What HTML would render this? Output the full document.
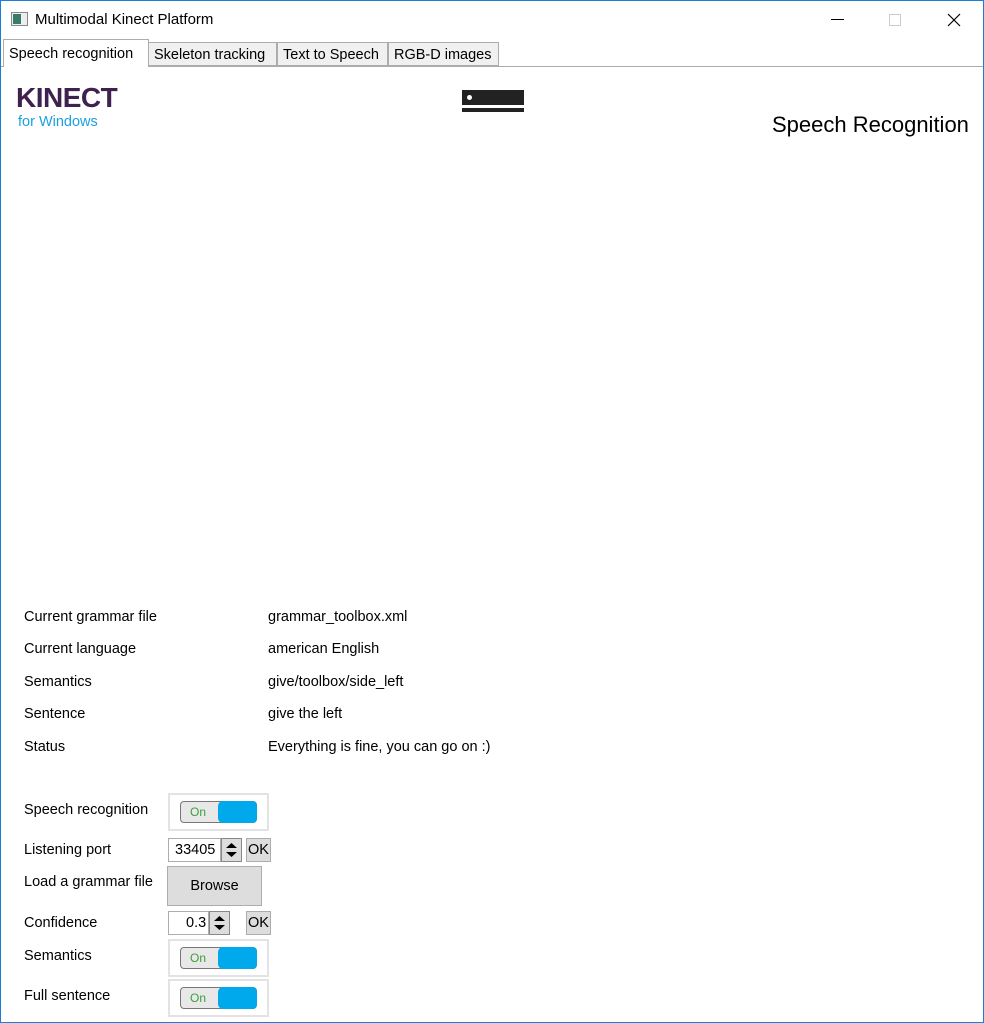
<!DOCTYPE html>
<html><head><style>
body{margin:0;width:984px;height:1023px;overflow:hidden;background:#fff;font-family:"Liberation Sans",sans-serif;}
.win{position:absolute;left:0;top:0;width:982px;height:1021px;border:1px solid #1a7fd4;background:#fff}
.a{position:absolute;white-space:nowrap}
.tab{position:absolute;top:41px;height:24px;background:#f0f0f0;border:1px solid #acacac;font-size:14.5px;line-height:24px;padding:0 5px;box-sizing:border-box;color:#000}
.lbl{position:absolute;left:23px;font-size:14.5px;color:#000}
.val{position:absolute;left:267px;font-size:14.5px;color:#000}
.tg{position:absolute;left:167px;width:101px;height:38px;border:2px solid #e3e3e3;box-sizing:border-box}
.sw{position:absolute;left:10px;top:6px;width:77px;height:22px;border:1px solid #777;border-radius:4px;background:#e8e8e8;box-sizing:border-box}
.sw b{position:absolute;right:-1px;top:-1px;width:39px;height:22px;background:#00a8ec;border-radius:5px}
.sw i{position:absolute;left:9px;top:3px;font-style:normal;font-size:12px;color:#3aa03a}
.btn{position:absolute;background:#ddd;border:1px solid #adadad;box-sizing:border-box;font-size:14.5px;text-align:center}
.num{position:absolute;border:1px solid #abadb3;box-sizing:border-box;font-size:14.5px;background:#fff}
.sp{position:absolute;width:21px;border:1px solid #888;background:#ddd;box-sizing:border-box}
</style></head><body><div class="win">
<svg class="a" style="left:10px;top:11px" width="18" height="15"><rect x="0.5" y="0.5" width="16" height="13" fill="#eee" stroke="#888"/><rect x="2" y="2" width="8" height="10" fill="#3a7a6a"/></svg>
<div class="a" style="left:34px;top:10px;font-size:15px">Multimodal Kinect Platform</div>
<div class="a" style="left:830px;top:18px;width:13px;height:1px;background:#000"></div>
<div class="a" style="left:888px;top:13px;width:10px;height:10px;border:1px solid #ccc"></div>
<svg class="a" style="left:946px;top:12px" width="14" height="14"><path d="M1 1L13 13M13 1L1 13" stroke="#000" stroke-width="1.2"/></svg>
<div class="a" style="left:0;top:65px;width:982px;height:1px;background:#acacac"></div>
<div class="tab" style="left:2px;top:38px;height:28px;width:146px;background:#fff;border-bottom:none;line-height:28px">Speech recognition</div>
<div class="tab" style="left:147px;width:129px">Skeleton tracking</div>
<div class="tab" style="left:276px;width:111px">Text to Speech</div>
<div class="tab" style="left:387px;width:111px">RGB-D images</div>
<div class="a" style="left:15px;top:81px;font-size:28px;font-weight:bold;color:#3f2150;letter-spacing:-0.5px">KINECT</div>
<div class="a" style="left:17px;top:113px;font-size:14.5px;color:#1ba0e0">for Windows</div>
<div class="a" style="left:461px;top:89px;width:62px;height:15px;background:#222"></div>
<div class="a" style="left:466px;top:94px;width:5px;height:5px;background:#fff;border-radius:50%"></div>
<div class="a" style="left:461px;top:107px;width:62px;height:4px;background:#222"></div>
<div class="a" style="left:771px;top:111px;font-size:22px">Speech Recognition</div>
<div class="lbl" style="top:608px">Current grammar file</div><div class="val" style="top:608px">grammar_toolbox.xml</div>
<div class="lbl" style="top:640px">Current language</div><div class="val" style="top:640px">american English</div>
<div class="lbl" style="top:673px">Semantics</div><div class="val" style="top:673px">give/toolbox/side_left</div>
<div class="lbl" style="top:705px">Sentence</div><div class="val" style="top:705px">give the left</div>
<div class="lbl" style="top:738px">Status</div><div class="val" style="top:738px">Everything is fine, you can go on :)</div>
<div class="lbl" style="top:801px">Speech recognition</div>
<div class="tg" style="top:792px"><div class="sw"><i>On</i><b></b></div></div>
<div class="lbl" style="top:841px">Listening port</div>
<div class="num" style="left:167px;top:837px;width:53px;height:24px;padding:3px 0 0 6px">33405</div>
<div class="sp" style="left:220px;top:837px;height:24px"><svg width="19" height="22"><path d="M4 9L9.5 4L15 9ZM4 13L9.5 18L15 13Z" fill="#000"/></svg></div>
<div class="btn" style="left:245px;top:837px;width:25px;height:24px;line-height:22px">OK</div>
<div class="lbl" style="top:873px">Load a grammar file</div>
<div class="btn" style="left:166px;top:865px;width:95px;height:40px;line-height:38px">Browse</div>
<div class="lbl" style="top:914px">Confidence</div>
<div class="num" style="left:167px;top:910px;width:41px;height:24px;padding:3px 0 0 17px">0.3</div>
<div class="sp" style="left:208px;top:910px;height:24px"><svg width="19" height="22"><path d="M4 9L9.5 4L15 9ZM4 13L9.5 18L15 13Z" fill="#000"/></svg></div>
<div class="btn" style="left:245px;top:910px;width:25px;height:24px;line-height:22px">OK</div>
<div class="lbl" style="top:947px">Semantics</div>
<div class="tg" style="top:938px"><div class="sw"><i>On</i><b></b></div></div>
<div class="lbl" style="top:987px">Full sentence</div>
<div class="tg" style="top:978px"><div class="sw"><i>On</i><b></b></div></div>
</div></body></html>
